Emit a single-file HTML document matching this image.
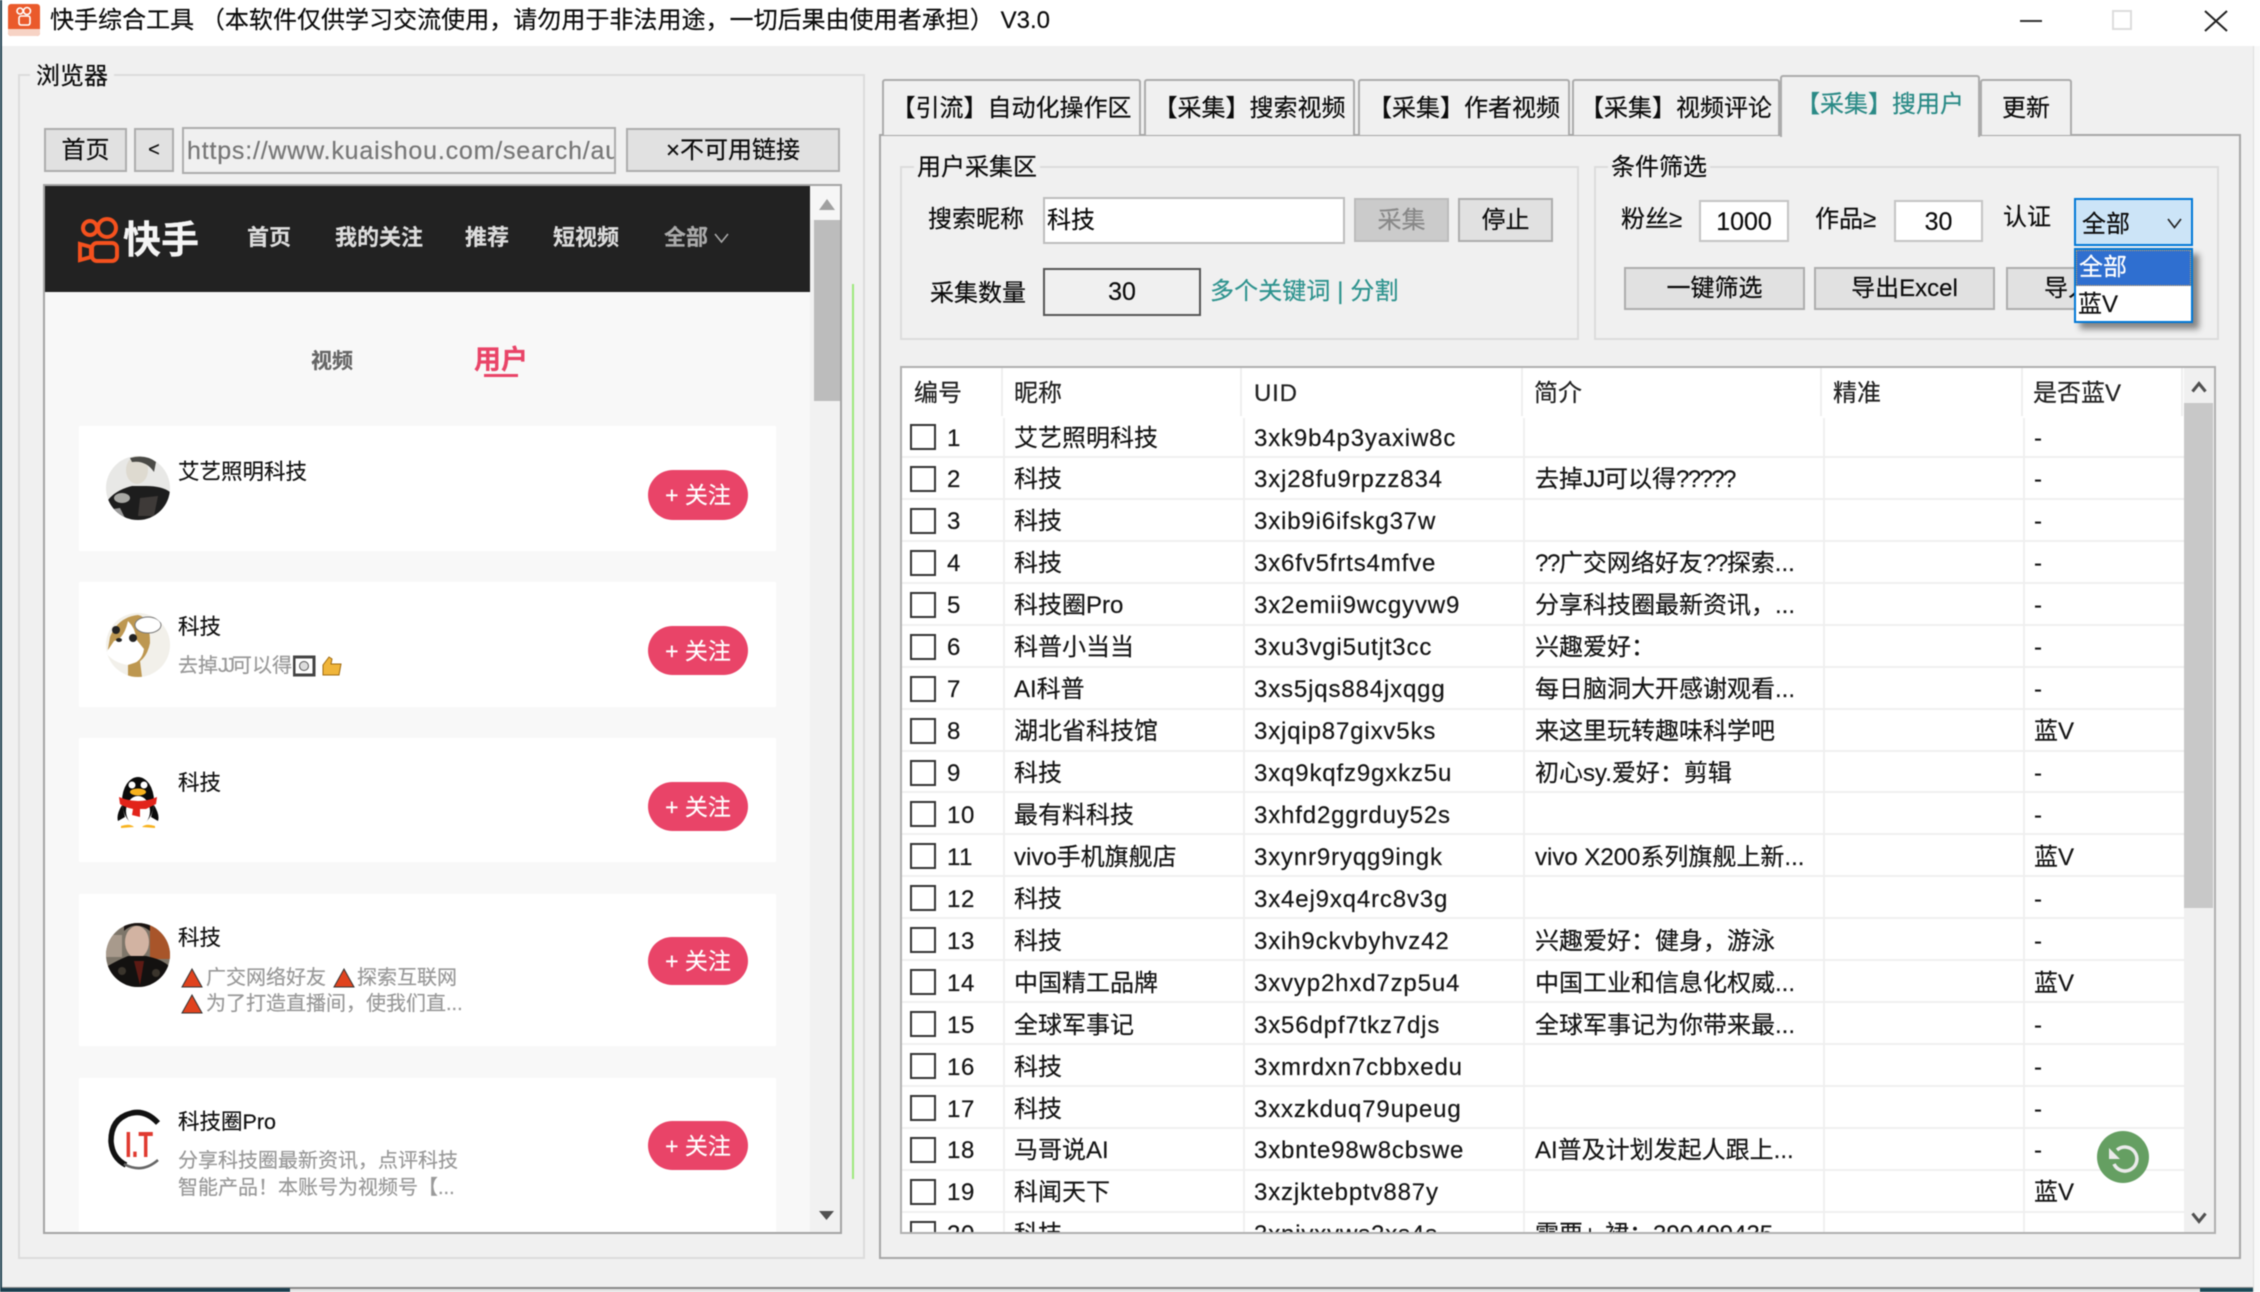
<!DOCTYPE html>
<html lang="zh">
<head>
<meta charset="utf-8">
<title>快手综合工具</title>
<style>
html,body{margin:0;padding:0;width:2260px;height:1292px;overflow:hidden;background:#fff}
#w{position:absolute;left:0;top:0;width:2260px;height:1292px;overflow:hidden;background:#f8f8f8;filter:blur(.45px);font-family:"Liberation Sans","Noto Sans CJK SC",sans-serif;color:#0c0c0c;-webkit-text-stroke:.2px}
.a{position:absolute;box-sizing:border-box}
.t{position:absolute;white-space:nowrap;line-height:40px;height:40px;font-size:24px}
.b{position:absolute;box-sizing:border-box;background:#e1e1e1;border:2px solid #adadad;text-align:center;font-size:24px;white-space:nowrap}
.gb{position:absolute;box-sizing:border-box;border:2px solid #dcdcdc}
.lab{position:absolute;background:#f0f0f0;font-size:24px;line-height:30px;height:30px;white-space:nowrap}
.tab{position:absolute;box-sizing:border-box;background:#f0f0f0;border:2px solid #ababab;border-bottom:none;top:79px;height:56px;text-align:center;line-height:55px;font-size:24px;white-space:nowrap;border-radius:3px 3px 0 0}
.card{position:absolute;left:79px;width:697px;background:#fff}
.fo{position:absolute;left:648px;width:100px;background:#e94468;color:#fff;border-radius:25px;text-align:center;font-size:23px;white-space:nowrap}
.nm{position:absolute;left:178px;font-size:21.5px;line-height:30px;height:30px;color:#111;white-space:nowrap}
.ds{position:absolute;left:178px;font-size:20px;line-height:30px;height:30px;color:#999;white-space:nowrap}
.nav{position:absolute;top:218px;line-height:40px;font-size:22px;font-weight:bold;color:#ddd;white-space:nowrap}
.r{position:relative;height:41.94px;background:#fff}
.r:after{content:"";position:absolute;left:0;right:0;bottom:0;height:2px;background:#f0f0f0}
.r span{position:absolute;top:2.5px;line-height:40px;font-size:24px;white-space:nowrap;color:#151515}
.r .u{left:352px;letter-spacing:.85px}
.r i{position:absolute;left:8px;top:8px;width:26px;height:26px;box-sizing:border-box;border:2px solid #333;background:#fff}
.r .n{left:45px;letter-spacing:.6px}
.r .k{left:112px}
.r .d{left:633px}
.r .v{left:1132px}
.sep{position:absolute;top:50px;bottom:0;width:2px;background:#f0f0f0}
.hs{position:absolute;top:0;height:50px;width:2px;background:#eee}
.th{position:absolute;top:6px;line-height:40px;font-size:24px;white-space:nowrap;color:#222}
svg{position:absolute;display:block}
</style>
</head>
<body>
<div id="w">
<!-- window -->
<div class="a" style="left:0;top:1287px;width:2260px;height:2px;background:#8a8a8a"></div>
<div class="a" style="left:0;top:1289px;width:2260px;height:3px;background:#e4e4e4"></div>
<div class="a" style="left:0;top:1288px;width:290px;height:4px;background:#1d3f4f"></div>
<div class="a" style="left:2200px;top:1288px;width:53px;height:4px;background:#1d4a58"></div>
<div class="a" style="left:0;top:0;width:2px;height:1292px;background:#1d3f4f;z-index:3"></div>
<div class="a" style="left:2px;top:46px;width:2251px;height:1241px;background:#f0f0f0"></div>
<div class="a" style="left:2px;top:0;width:2258px;height:46px;background:#fff"></div>
<div class="a" style="left:2253px;top:46px;width:7px;height:1246px;background:#f8f8f8;border-left:1px solid #ddd"></div>

<!-- title bar -->
<div class="a" style="left:8px;top:4px;width:32px;height:32px;background:#ea5a2b;border-radius:3px;overflow:hidden">
  <svg width="32" height="32" viewBox="0 0 32 32" style="left:0;top:0"><circle cx="12" cy="7" r="3" fill="none" stroke="#fff" stroke-width="1.6"/><circle cx="19" cy="7" r="3.5" fill="none" stroke="#fff" stroke-width="1.6"/><rect x="11" y="12" width="11" height="9" rx="2" fill="none" stroke="#fff" stroke-width="1.6"/><rect x="0" y="25" width="32" height="7" fill="#f7d3c5"/></svg>
</div>
<div class="t" style="left:50px;top:1px;font-size:24px;letter-spacing:.03px">快手综合工具 （本软件仅供学习交流使用，请勿用于非法用途，一切后果由使用者承担） V3.0</div>
<div class="a" style="left:2020px;top:20px;width:22px;height:2px;background:#333"></div>
<div class="a" style="left:2112px;top:10px;width:20px;height:20px;border:2px solid #ddd"></div>
<svg style="left:2204px;top:10px" width="24" height="22" viewBox="0 0 24 22"><path d="M1 1 L23 21 M23 1 L1 21" stroke="#222" stroke-width="2" fill="none"/></svg>

<!-- browser group -->
<div class="gb" style="left:18px;top:74px;width:847px;height:1185px"></div>
<div class="lab" style="left:30px;top:62px;padding:0 6px">浏览器</div>
<div class="b" style="left:44px;top:128px;width:83px;height:44px;line-height:42px">首页</div>
<div class="b" style="left:134px;top:128px;width:40px;height:44px;line-height:40px;font-size:20px">&lt;</div>
<div class="a" style="left:182px;top:127px;width:434px;height:47px;border:2px solid #adadad;background:#f0f0f0;overflow:hidden;font-size:25px;letter-spacing:.8px;line-height:44px;color:#777;padding-left:3px;white-space:nowrap">https://www.kuaishou.com/search/au</div>
<div class="b" style="left:626px;top:128px;width:214px;height:44px;line-height:42px">×不可用链接</div>

<!-- browser frame -->
<div class="a" style="left:43px;top:184px;width:799px;height:1050px;border:2px solid #a4a4a4;background:#f8f8f8"></div>
<div class="a" style="left:45px;top:186px;width:765px;height:106px;background:#222"></div>
<svg style="left:78px;top:217px" width="42" height="46" viewBox="0 0 42 46"><g fill="none" stroke="#f4511e" stroke-width="4"><circle cx="12" cy="11" r="7"/><circle cx="29" cy="11" r="9"/><rect x="14" y="26" width="25" height="18" rx="5"/><path d="M13 30 L2 27 V43 L13 40 Z"/></g></svg>
<div class="a" style="left:123px;top:219px;font-size:38px;line-height:44px;color:#f4f4f4;font-weight:bold;white-space:nowrap">快手</div>
<div class="nav" style="left:247px">首页</div>
<div class="nav" style="left:335px">我的关注</div>
<div class="nav" style="left:465px">推荐</div>
<div class="nav" style="left:553px">短视频</div>
<div class="nav" style="left:664px;color:#aaa">全部</div>
<svg style="left:714px;top:233px" width="15" height="11" viewBox="0 0 15 11"><path d="M1 1 L7.5 9 L14 1" stroke="#aaa" stroke-width="1.6" fill="none"/></svg>
<!-- browser scrollbar -->
<div class="a" style="left:810px;top:186px;width:30px;height:1046px;background:#f1f1f1"></div>
<div class="a" style="left:810px;top:186px;width:30px;height:34px;background:#f6f6f6"></div>
<div class="a" style="left:814px;top:220px;width:26px;height:181px;background:#bcbcbc"></div>
<svg style="left:819px;top:199px" width="16" height="11" viewBox="0 0 16 11"><path d="M8 0 L16 11 H0Z" fill="#a0a0a0"/></svg>
<svg style="left:819px;top:1211px" width="15" height="9" viewBox="0 0 15 9"><path d="M0 0 H15 L7.5 9Z" fill="#505050"/></svg>
<div class="a" style="left:852px;top:284px;width:2px;height:895px;background:#9ce87c"></div>

<!-- web tabs -->
<div class="a" style="left:311px;top:342px;font-size:21px;line-height:40px;color:#666;font-weight:bold;white-space:nowrap">视频</div>
<div class="a" style="left:474px;top:340px;font-size:27px;line-height:40px;color:#e94468;font-weight:bold;white-space:nowrap">用户</div>
<div class="a" style="left:484px;top:374px;width:34px;height:3px;background:#e94468"></div>

<!-- cards -->
<div class="card" style="top:426px;height:125px"></div>
<div class="card" style="top:582px;height:125px"></div>
<div class="card" style="top:738px;height:124px"></div>
<div class="card" style="top:894px;height:152px"></div>
<div class="card" style="top:1078px;height:154px"></div>

<!-- avatar 1 -->
<svg style="left:106px;top:456px" width="64" height="64" viewBox="0 0 64 64"><defs><clipPath id="c1"><circle cx="32" cy="32" r="32"/></clipPath></defs><g clip-path="url(#c1)"><rect width="64" height="64" fill="#e8e8e6"/><ellipse cx="31" cy="14" rx="11" ry="14" fill="#dedad0"/><path d="M24 2 Q40 -2 50 6 L48 16 Q40 4 26 6Z" fill="#4a4a46"/><path d="M2 44 Q10 34 26 30 L40 30 Q56 30 64 36 V64 H2Z" fill="#1d1d1d"/><ellipse cx="16" cy="42" rx="8" ry="5" fill="#a8a8a4"/><path d="M34 42 L52 40 L48 60 L32 60Z" fill="#3e3a38"/><path d="M0 54 L14 52 L20 64 L0 64Z" fill="#999"/></g></svg>
<!-- avatar 2 -->
<svg style="left:106px;top:613px" width="64" height="64" viewBox="0 0 64 64"><defs><clipPath id="c2"><circle cx="32" cy="32" r="32"/></clipPath></defs><g clip-path="url(#c2)"><rect width="64" height="64" fill="#f2f0ea"/><path d="M4 24 Q12 4 32 2 Q44 4 44 30 Q40 50 24 52 Q6 50 2 36Z" fill="#bd9750"/><path d="M22 8 Q30 16 30 26 L38 36 Q36 50 22 52 Q8 50 0 40 L8 28 Q18 26 22 8Z" fill="#fff"/><circle cx="10" cy="17" r="4" fill="#222"/><circle cx="27" cy="25" r="4" fill="#222"/><ellipse cx="13" cy="27" rx="3" ry="2" fill="#222"/><path d="M22 52 L22 64 L36 64 L34 48Z" fill="#bd9750"/><ellipse cx="42" cy="12" rx="13" ry="8" fill="#fff" stroke="#777" stroke-width="1"/></g></svg>
<!-- avatar 3 penguin -->
<svg style="left:116px;top:771px" width="44" height="58" viewBox="0 0 44 58"><ellipse cx="22" cy="30" rx="16" ry="24" fill="#0b0b0b"/><path d="M6 34 Q0 44 2 50 L9 46 Z M38 34 Q44 44 42 50 L35 46Z" fill="#0b0b0b"/><ellipse cx="22" cy="40" rx="12" ry="15" fill="#fff"/><circle cx="16" cy="14" r="3.5" fill="#fff"/><circle cx="28" cy="14" r="3.5" fill="#fff"/><ellipse cx="22" cy="21" rx="8" ry="3.5" fill="#f8b21c"/><path d="M3 26 Q22 34 41 26 L40 33 Q30 38 30 38 L24 38 L24 46 L16 44 L17 38 Q8 36 4 33Z" fill="#e2231a"/><path d="M5 55 Q14 52 18 56 L5 57Z M39 55 Q30 52 26 56 L39 57Z" fill="#f8b21c"/></svg>
<!-- avatar 4 -->
<svg style="left:106px;top:923px" width="64" height="64" viewBox="0 0 64 64"><defs><clipPath id="c4"><circle cx="32" cy="32" r="32"/></clipPath></defs><g clip-path="url(#c4)"><rect width="64" height="64" fill="#7e766a"/><rect x="44" y="0" width="20" height="36" fill="#a8552a"/><rect x="0" y="12" width="16" height="22" fill="#a89a8c"/><ellipse cx="31" cy="19" rx="12" ry="16" fill="#d2b3a2"/><path d="M18 8 Q30 -3 44 8 L44 0 L18 0Z" fill="#1a1412"/><path d="M0 44 Q14 36 22 33 L40 33 Q56 36 64 44 V64 H0Z" fill="#131110"/><path d="M28 38 L38 38 L34 62 Z" fill="#5d1a14"/><circle cx="16" cy="48" r="4" fill="#3a342c"/><circle cx="50" cy="50" r="4" fill="#3a342c"/></g></svg>
<!-- avatar 5 -->
<svg style="left:106px;top:1108px" width="66" height="66" viewBox="0 0 66 66"><path d="M52 15 Q40 2 26 5 Q5 10 5 33 Q6 50 20 57" fill="none" stroke="#111" stroke-width="5.5"/><path d="M18 56 Q36 66 52 52" fill="none" stroke="#666" stroke-width="2.5"/><text x="19" y="49" font-family="Liberation Sans,sans-serif" font-weight="bold" font-size="36" fill="#e03a30" textLength="28" lengthAdjust="spacingAndGlyphs">I.T</text></svg>

<div class="nm" style="top:457px">艾艺照明科技</div>
<div class="nm" style="top:612px">科技</div>
<div class="ds" style="top:651px">去掉<span style="letter-spacing:-3px">JJ</span>可以得</div>
<svg style="left:293px;top:655px" width="50" height="22" viewBox="0 0 50 22"><rect x="1" y="2" width="20" height="18" fill="none" stroke="#444" stroke-width="3"/><circle cx="11" cy="11" r="4.5" fill="#ddd" stroke="#555"/><path d="M30 10 L36 2 L39 4 L38 9 L48 9 L46 20 L30 20Z" fill="#f0b53a" stroke="#a06a10"/></svg>
<div class="nm" style="top:768px">科技</div>
<div class="nm" style="top:923px">科技</div>
<svg style="left:181px;top:968px" width="22" height="20" viewBox="0 0 22 20"><path d="M11 1 L21 19 H1Z" fill="#e0431e" stroke="#333"/></svg>
<div class="ds" style="left:206px;top:963px">广交网络好友</div>
<svg style="left:333px;top:968px" width="22" height="20" viewBox="0 0 22 20"><path d="M11 1 L21 19 H1Z" fill="#e0431e" stroke="#333"/></svg>
<div class="ds" style="left:357px;top:963px">探索互联网</div>
<svg style="left:181px;top:994px" width="22" height="20" viewBox="0 0 22 20"><path d="M11 1 L21 19 H1Z" fill="#e0431e" stroke="#333"/></svg>
<div class="ds" style="left:206px;top:989px">为了打造直播间，使我们直...</div>
<div class="nm" style="top:1107px">科技圈Pro</div>
<div class="ds" style="top:1146px">分享科技圈最新资讯，点评科技</div>
<div class="ds" style="top:1173px">智能产品！本账号为视频号【...</div>

<div class="fo" style="top:470px;height:50px;line-height:51px">+ 关注</div>
<div class="fo" style="top:626px;height:49px;line-height:50px">+ 关注</div>
<div class="fo" style="top:782px;height:49px;line-height:50px">+ 关注</div>
<div class="fo" style="top:937px;height:48px;line-height:49px">+ 关注</div>
<div class="fo" style="top:1121px;height:49px;line-height:50px">+ 关注</div>

<div class="a" style="left:45px;top:1232px;width:795px;height:2px;background:#a4a4a4"></div>

<!-- tab panel -->
<div class="a" style="left:879px;top:134px;width:1362px;height:1125px;border:2px solid #a6a6a6;background:#f0f0f0"></div>
<div class="tab" style="left:882px;width:259px">【引流】自动化操作区</div>
<div class="tab" style="left:1144px;width:211px">【采集】搜索视频</div>
<div class="tab" style="left:1358px;width:212px">【采集】作者视频</div>
<div class="tab" style="left:1572px;width:208px">【采集】视频评论</div>
<div class="tab" style="left:1780px;top:75px;width:200px;height:62px;color:#2a8a86;line-height:55px;z-index:2">【采集】搜用户</div>
<div class="tab" style="left:1980px;width:92px">更新</div>

<!-- 用户采集区 -->
<div class="gb" style="left:900px;top:166px;width:679px;height:174px"></div>
<div class="lab" style="left:914px;top:153px;padding:0 3px">用户采集区</div>
<div class="t" style="left:928px;top:200px">搜索昵称</div>
<div class="a" style="left:1043px;top:197px;width:302px;height:47px;background:#fff;border:2px solid #bdbdbd;font-size:24px;line-height:44px;padding-left:2px">科技</div>
<div class="b" style="left:1354px;top:198px;width:95px;height:44px;line-height:42px;background:#cbcbcb;color:#888;border-color:#bcbcbc">采集</div>
<div class="b" style="left:1458px;top:198px;width:95px;height:44px;line-height:42px">停止</div>
<div class="t" style="left:930px;top:274px">采集数量</div>
<div class="a" style="left:1043px;top:268px;width:158px;height:48px;background:#f0f0f0;border:2px solid #555;text-align:center;font-size:25px;line-height:44px">30</div>
<div class="t" style="left:1210px;top:272px;color:#2e938e;letter-spacing:.1px">多个关键词 | 分割</div>

<!-- 条件筛选 -->
<div class="gb" style="left:1594px;top:166px;width:625px;height:174px"></div>
<div class="lab" style="left:1608px;top:153px;padding:0 3px">条件筛选</div>
<div class="t" style="left:1621px;top:200px">粉丝≥</div>
<div class="a" style="left:1699px;top:200px;width:90px;height:42px;background:#fff;border:2px solid #c4c4c4;text-align:center;font-size:25px;line-height:40px">1000</div>
<div class="t" style="left:1815px;top:200px">作品≥</div>
<div class="a" style="left:1894px;top:200px;width:89px;height:42px;background:#fff;border:2px solid #c4c4c4;text-align:center;font-size:25px;line-height:40px">30</div>
<div class="t" style="left:2003px;top:198px">认证</div>
<div class="b" style="left:1624px;top:267px;width:181px;height:43px;line-height:40px">一键筛选</div>
<div class="b" style="left:1814px;top:267px;width:181px;height:43px;line-height:40px">导出Excel</div>
<div class="b" style="left:2006px;top:267px;width:181px;height:43px;line-height:40px;text-align:left;padding-left:36px">导入Excel</div>
<div class="a" style="left:2074px;top:198px;width:119px;height:48px;background:#cce4f7;border:2px solid #0078d7;font-size:24px;line-height:50px;padding-left:6px">全部</div>
<svg style="left:2167px;top:218px" width="15" height="11" viewBox="0 0 15 11"><path d="M1 1 L7.5 9.5 L14 1" stroke="#222" stroke-width="1.6" fill="none"/></svg>
<div class="a" style="left:2074px;top:248px;width:119px;height:75px;background:#fff;border:2px solid #0078d7;box-shadow:6px 6px 6px rgba(0,0,0,.45)"></div>
<div class="a" style="left:2076px;top:250px;width:115px;height:36px;background:#2f6fd0;border:1px dotted #e6a64a;color:#fff;font-size:24px;line-height:34px;padding-left:2px">全部</div>
<div class="a" style="left:2078px;top:287px;font-size:24px;line-height:36px;color:#111;white-space:nowrap">蓝V</div>

<!-- table -->
<div class="a" style="left:900px;top:366px;width:1316px;height:868px;border:2px solid #b0b0b0;background:#fff;overflow:hidden">
  <div style="position:absolute;left:0;top:0;width:1282px;height:864px;overflow:hidden">
    <div class="hs" style="left:99px"></div><div class="hs" style="left:338px"></div><div class="hs" style="left:619px"></div><div class="hs" style="left:918px"></div><div class="hs" style="left:1119px"></div><div class="hs" style="left:1279px"></div>
    <div class="th" style="left:12px">编号</div>
    <div class="th" style="left:112px">昵称</div>
    <div class="th" style="left:352px;letter-spacing:.8px">UID</div>
    <div class="th" style="left:632px">简介</div>
    <div class="th" style="left:931px">精准</div>
    <div class="th" style="left:1131px">是否蓝V</div>
    <div style="position:absolute;left:0;top:48px;width:1282px">
      <div class="r"><i></i><span class="n">1</span><span class="k">艾艺照明科技</span><span class="u">3xk9b4p3yaxiw8c</span><span class="v">-</span></div>
      <div class="r"><i></i><span class="n">2</span><span class="k">科技</span><span class="u">3xj28fu9rpzz834</span><span class="d">去掉<span style="position:static;letter-spacing:-1.5px">JJ</span>可以得<span style="position:static;letter-spacing:-1.6px">?????</span></span><span class="v">-</span></div>
      <div class="r"><i></i><span class="n">3</span><span class="k">科技</span><span class="u">3xib9i6ifskg37w</span><span class="v">-</span></div>
      <div class="r"><i></i><span class="n">4</span><span class="k">科技</span><span class="u">3x6fv5frts4mfve</span><span class="d"><span style="position:static;letter-spacing:-1.4px">??</span>广交网络好友<span style="position:static;letter-spacing:-1.4px">??</span>探索...</span><span class="v">-</span></div>
      <div class="r"><i></i><span class="n">5</span><span class="k">科技圈Pro</span><span class="u">3x2emii9wcgyvw9</span><span class="d">分享科技圈最新资讯，...</span><span class="v">-</span></div>
      <div class="r"><i></i><span class="n">6</span><span class="k">科普小当当</span><span class="u">3xu3vgi5utjt3cc</span><span class="d">兴趣爱好：</span><span class="v">-</span></div>
      <div class="r"><i></i><span class="n">7</span><span class="k">AI科普</span><span class="u">3xs5jqs884jxqgg</span><span class="d">每日脑洞大开感谢观看...</span><span class="v">-</span></div>
      <div class="r"><i></i><span class="n">8</span><span class="k">湖北省科技馆</span><span class="u">3xjqip87gixv5ks</span><span class="d">来这里玩转趣味科学吧</span><span class="v">蓝V</span></div>
      <div class="r"><i></i><span class="n">9</span><span class="k">科技</span><span class="u">3xq9kqfz9gxkz5u</span><span class="d">初心sy.爱好：剪辑</span><span class="v">-</span></div>
      <div class="r"><i></i><span class="n">10</span><span class="k">最有料科技</span><span class="u">3xhfd2ggrduy52s</span><span class="v">-</span></div>
      <div class="r"><i></i><span class="n">11</span><span class="k">vivo手机旗舰店</span><span class="u">3xynr9ryqg9ingk</span><span class="d">vivo X200系列旗舰上新...</span><span class="v">蓝V</span></div>
      <div class="r"><i></i><span class="n">12</span><span class="k">科技</span><span class="u">3x4ej9xq4rc8v3g</span><span class="v">-</span></div>
      <div class="r"><i></i><span class="n">13</span><span class="k">科技</span><span class="u">3xih9ckvbyhvz42</span><span class="d">兴趣爱好：健身，游泳</span><span class="v">-</span></div>
      <div class="r"><i></i><span class="n">14</span><span class="k">中国精工品牌</span><span class="u">3xvyp2hxd7zp5u4</span><span class="d">中国工业和信息化权威...</span><span class="v">蓝V</span></div>
      <div class="r"><i></i><span class="n">15</span><span class="k">全球军事记</span><span class="u">3x56dpf7tkz7djs</span><span class="d">全球军事记为你带来最...</span><span class="v">-</span></div>
      <div class="r"><i></i><span class="n">16</span><span class="k">科技</span><span class="u">3xmrdxn7cbbxedu</span><span class="v">-</span></div>
      <div class="r"><i></i><span class="n">17</span><span class="k">科技</span><span class="u">3xxzkduq79upeug</span><span class="v">-</span></div>
      <div class="r"><i></i><span class="n">18</span><span class="k">马哥说AI</span><span class="u">3xbnte98w8cbswe</span><span class="d">AI普及计划发起人跟上...</span><span class="v">-</span></div>
      <div class="r"><i></i><span class="n">19</span><span class="k">科闻天下</span><span class="u">3xzjktebptv887y</span><span class="v">蓝V</span></div>
      <div class="r"><i></i><span class="n">20</span><span class="k">科技</span><span class="u">3xnjvxyws2xs4s</span><span class="d">需要+-裙：390409435</span></div>
    </div>
    <div class="sep" style="left:101px"></div><div class="sep" style="left:341px"></div><div class="sep" style="left:621px"></div><div class="sep" style="left:921px"></div><div class="sep" style="left:1121px"></div>
  </div>
  <div style="position:absolute;left:1282px;top:0;width:32px;height:864px;background:#f0f0f0"></div>
  <div style="position:absolute;left:1282px;top:35px;width:29px;height:505px;background:#c8c8c8"></div>
  <svg style="left:1289px;top:13px" width="16" height="12" viewBox="0 0 16 12"><path d="M1.5 10.5 L8 2.5 L14.5 10.5" stroke="#505050" stroke-width="3" fill="none"/></svg>
  <svg style="left:1289px;top:844px" width="16" height="12" viewBox="0 0 16 12"><path d="M1.5 1.5 L8 9.5 L14.5 1.5" stroke="#505050" stroke-width="3" fill="none"/></svg>
</div>

<!-- refresh -->
<svg style="left:2097px;top:1131px;z-index:5" width="52" height="52" viewBox="0 0 52 52"><circle cx="26" cy="26" r="26" fill="#659f62"/><path d="M20 19 A12 12 0 1 1 17 33" fill="none" stroke="#eaeaea" stroke-width="3.5"/><path d="M12 17 V28 H23Z" fill="#eaeaea"/></svg>
</div>
</body>
</html>
